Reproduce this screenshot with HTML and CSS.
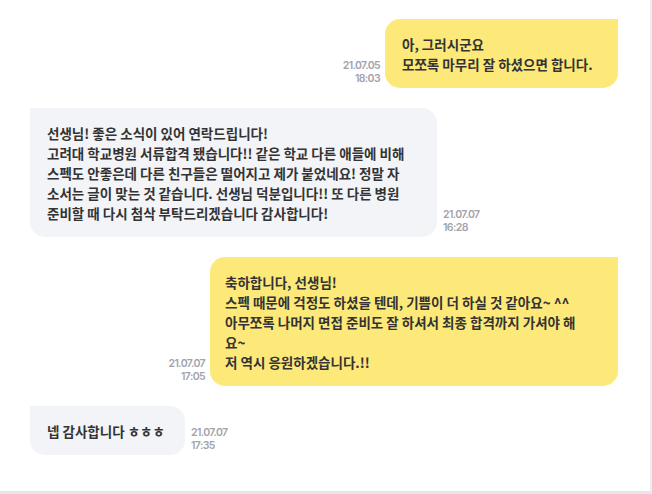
FILE: index.html
```html
<!DOCTYPE html>
<html>
  <head>
    <meta charset="utf-8" />
    <title>상담 메시지</title>
    <link rel="stylesheet" href="styles.css">
  </head>
  <body>
    <main class="chat">
      <div class="row row-out">
        <span class="time">21.07.05<br>18:03</span>
        <div class="bubble bubble-out bubble-1">
          아, 그러시군요<br>
          모쪼록 마무리 잘 하셨으면 합니다.
        </div>
      </div>

      <div class="row row-in">
        <div class="bubble bubble-in bubble-2">
          선생님! 좋은 소식이 있어 연락드립니다!<br>
          고려대 학교병원 서류합격 됐습니다!! 같은 학교 다른 애들에 비해<br>
          스펙도 안좋은데 다른 친구들은 떨어지고 제가 붙었네요! 정말 자<br>
          소서는 글이 맞는 것 같습니다. 선생님 덕분입니다!! 또 다른 병원<br>
          준비할 때 다시 첨삭 부탁드리겠습니다 감사합니다!
        </div>
        <span class="time">21.07.07<br>16:28</span>
      </div>

      <div class="row row-out">
        <span class="time">21.07.07<br>17:05</span>
        <div class="bubble bubble-out bubble-3">
          축하합니다, 선생님!<br>
          스펙 때문에 걱정도 하셨을 텐데, 기쁨이 더 하실 것 같아요~ ^^<br>
          아무쪼록 나머지 면접 준비도 잘 하셔서 최종 합격까지 가셔야 해<br>
          요~<br>
          저 역시 응원하겠습니다.!!
        </div>
      </div>

      <div class="row row-in">
        <div class="bubble bubble-in bubble-4">
          넵 감사합니다 ㅎㅎㅎ
        </div>
        <span class="time">21.07.07<br>17:35</span>
      </div>
    </main>
  </body>
</html>
```

FILE: styles.css
```css
body {
  margin: 0;
  background-color: #ffffff;
  font-family: "Noto Sans CJK KR", "Noto Sans", sans-serif;
}

.chat {
  box-sizing: border-box;
  width: 652px;
  height: 494px;
  padding: 19px 32px 0 30px;
  border-right: 2px solid #ededf0;
  border-bottom: 3px solid #e6e6ea;
  display: flex;
  flex-direction: column;
  gap: 20px;
}

.row {
  display: flex;
  align-items: flex-end;
  gap: 5px;
}

.row-out {
  justify-content: flex-end;
}

.bubble {
  box-sizing: border-box;
  padding: 15px 17px 14px 17px;
  font-size: 13.5px;
  line-height: 20px;
  font-weight: 600;
  color: #333333;
  white-space: nowrap;
  border-radius: 15px;
}

.bubble-out {
  background-color: #fde97a;
  border-top-right-radius: 0;
}

.bubble-in {
  background-color: #f3f4f8;
  border-top-left-radius: 0;
}

.bubble-1 {
  width: 233px;
}

.bubble-2 {
  width: 407px;
}

.bubble-3 {
  width: 408px;
  padding-left: 15px;
}

.bubble-4 {
  width: 155px;
}

.time {
  font-family: Inter, Roboto, sans-serif;
  font-size: 10.5px;
  line-height: 13px;
  font-weight: 600;
  letter-spacing: -0.6px;
  color: #a3a3ab;
  margin-bottom: 3px;
}

.row-out .time {
  text-align: right;
}

.row-in .time {
  margin-left: 1px;
}
```
